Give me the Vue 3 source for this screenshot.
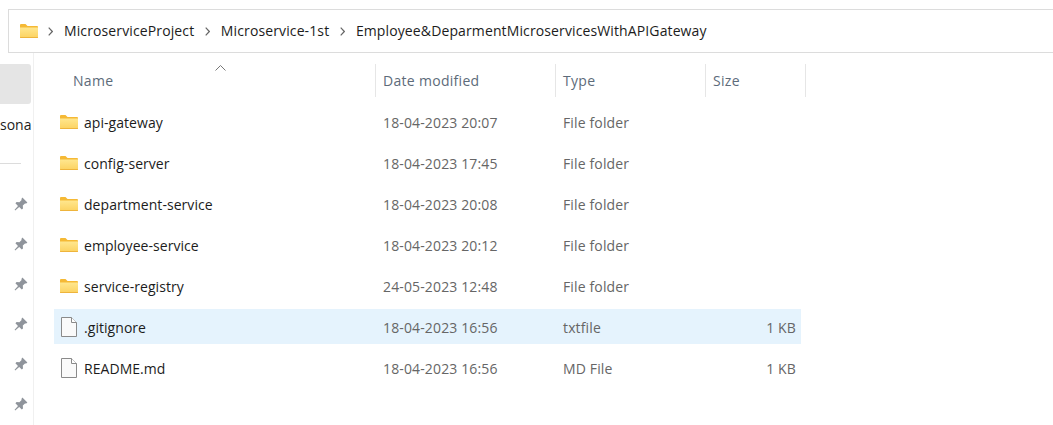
<template>
  <div class="window">
    <div class="address-bar">
      <svg class="folder crumb-folder" viewBox="0 0 18 14"><use href="#folder-shape" /></svg>
      <template v-for="part in crumbs" :key="part">
        <svg class="chevron" viewBox="0 0 5 9"><path d="M.7.7L4.3 4.5.7 8.3" /></svg>
        <span class="crumb">{{ part }}</span>
      </template>
    </div>

    <div class="body">
      <aside class="sidebar">
        <div class="active-item"></div>
        <div class="side-label">sona</div>
        <div class="side-divider"></div>
        <div class="pins">
          <svg v-for="n in 6" :key="n" class="pin" viewBox="0 0 14 14">
            <path d="M8.4.6l5 5-1.2 1-1.2-.2-2.2 2.2.2 2.8-1.2 1.2-2.6-2.6L1.2 13.4.6 12.8l3.4-3.9-2.6-2.6 1.2-1.2 2.8.2 2.2-2.2-.2-1.2z" />
          </svg>
        </div>
      </aside>

      <main class="list">
        <div class="header">
          <svg class="sort-caret" viewBox="0 0 11 6"><path d="M.5 5.5L5.5.5l5 5" /></svg>
          <div class="head-cell col-name">Name</div>
          <div class="head-cell col-date">Date modified</div>
          <div class="head-cell col-type">Type</div>
          <div class="head-cell col-size">Size</div>
        </div>

        <div class="rows">
          <div v-for="row in rows" :key="row.name" class="row" :class="{ selected: row.selected }">
            <svg v-if="row.folder" class="folder" viewBox="0 0 18 14"><use href="#folder-shape" /></svg>
            <svg v-else class="file" viewBox="0 0 16 20">
              <path d="M.5.5h10l5 5v14H.5z" fill="#fafafa" stroke="#8a8a8a" />
              <path d="M10.5.5v5h5" fill="#fff" stroke="#8a8a8a" />
            </svg>
            <div class="cell-name">{{ row.name }}</div>
            <div class="cell cell-date">{{ row.date }}</div>
            <div class="cell cell-type">{{ row.type }}</div>
            <div class="cell cell-size">{{ row.size }}</div>
          </div>
        </div>
      </main>
    </div>

    <svg class="defs" width="0" height="0">
      <defs>
        <linearGradient id="folder-fill" x1="0" y1="0" x2="0" y2="1">
          <stop offset="0" stop-color="#ffe78f" />
          <stop offset="1" stop-color="#fcd260" />
        </linearGradient>
        <symbol id="folder-shape" viewBox="0 0 18 14">
          <path d="M0 1a1 1 0 0 1 1-1h4.5l2 2H17a1 1 0 0 1 1 1v10a1 1 0 0 1-1 1H1a1 1 0 0 1-1-1z" fill="#f5b935" />
          <path d="M0 3.4h18V13a1 1 0 0 1-1 1H1a1 1 0 0 1-1-1z" fill="url(#folder-fill)" />
          <path d="M0 13h18v.2a.8.8 0 0 1-.8.8H.8a.8.8 0 0 1-.8-.8z" fill="#eeb43c" />
        </symbol>
      </defs>
    </svg>
  </div>
</template>

<script setup>
const crumbs = [
  "MicroserviceProject",
  "Microservice-1st",
  "Employee&DeparmentMicroservicesWithAPIGateway",
];

const rows = [
  { name: "api-gateway", date: "18-04-2023 20:07", type: "File folder", size: "", folder: true },
  { name: "config-server", date: "18-04-2023 17:45", type: "File folder", size: "", folder: true },
  { name: "department-service", date: "18-04-2023 20:08", type: "File folder", size: "", folder: true },
  { name: "employee-service", date: "18-04-2023 20:12", type: "File folder", size: "", folder: true },
  { name: "service-registry", date: "24-05-2023 12:48", type: "File folder", size: "", folder: true },
  { name: ".gitignore", date: "18-04-2023 16:56", type: "txtfile", size: "1 KB", selected: true },
  { name: "README.md", date: "18-04-2023 16:56", type: "MD File", size: "1 KB" },
];
</script>

<style>
html,
body {
  background: #fff;
  overflow: hidden;
}
</style>

<style scoped>
.window {
  width: 1053px;
  height: 425px;
  overflow: hidden;
  background: #fff;
  font-family: "Open Sans", "Noto Sans", sans-serif;
  font-size: 14px;
  color: #1c1c1c;
}

.defs {
  display: block;
}

.address-bar {
  display: flex;
  align-items: center;
  height: 44px;
  box-sizing: border-box;
  margin: 9px 0 0 8px;
  padding-left: 11px;
  border: 1px solid #dcdcdc;
  border-right: none;
}

.crumb-folder {
  margin-right: 10px;
}

.chevron {
  width: 5px;
  height: 9px;
  flex: none;
  fill: none;
  stroke: #666;
  stroke-width: 1.2;
}

.crumb {
  margin: 0 10.6px 0 11px;
  letter-spacing: 0.12px;
  line-height: 20px;
}

.body {
  display: flex;
  height: 372px;
}

.sidebar {
  width: 34px;
  flex: none;
  box-sizing: border-box;
  padding-top: 11px;
  border-right: 1px solid #f0f0f0;
}

.active-item {
  width: 31px;
  height: 40px;
  background: #e5e5e5;
  border-radius: 0 3px 3px 0;
}

.side-label {
  margin-top: 11px;
  height: 20px;
  line-height: 20px;
  text-align: right;
  padding-right: 2px;
  overflow: hidden;
  white-space: nowrap;
}

.side-divider {
  width: 21px;
  height: 1px;
  margin-top: 28px;
  background: #dcdcdc;
}

.pins {
  display: flex;
  flex-direction: column;
  gap: 26px;
  margin-top: 33px;
  padding-left: 14px;
}

.pin {
  width: 14px;
  height: 14px;
  fill: #8f949b;
}

.list {
  flex: 1;
  min-width: 0;
}

.header {
  position: relative;
  display: grid;
  grid-template-columns: 342px 180px 150px 100px;
  height: 32px;
  margin-top: 11px;
}

.sort-caret {
  position: absolute;
  left: 181px;
  top: 1px;
  width: 11px;
  height: 6px;
  fill: none;
  stroke: #777;
}

.head-cell {
  box-sizing: border-box;
  border-right: 1px solid #e6e6e6;
  line-height: 33px;
  color: #5d6b7a;
  letter-spacing: 0.3px;
}

.col-name {
  padding-left: 39px;
}

.col-date,
.col-type,
.col-size {
  padding-left: 7px;
}

.rows {
  display: flex;
  flex-direction: column;
  gap: 6px;
  margin-top: 8px;
  margin-left: 20px;
  width: 747px;
}

.row {
  display: grid;
  grid-template-columns: 30px 299px 180px 150px 83px;
  align-items: center;
  height: 35px;
}

.row.selected {
  background: #e5f3fd;
}

.folder {
  width: 18px;
  height: 14px;
  flex: none;
}

.row .folder {
  margin-left: 6px;
}

.file {
  width: 16px;
  height: 20px;
  margin-left: 7px;
}

.cell-name {
  padding-top: 2px;
  letter-spacing: 0.05px;
  white-space: nowrap;
}

.cell {
  padding-top: 2px;
  color: #666;
  letter-spacing: 0.14px;
  white-space: nowrap;
}

.cell-size {
  text-align: right;
}
</style>
